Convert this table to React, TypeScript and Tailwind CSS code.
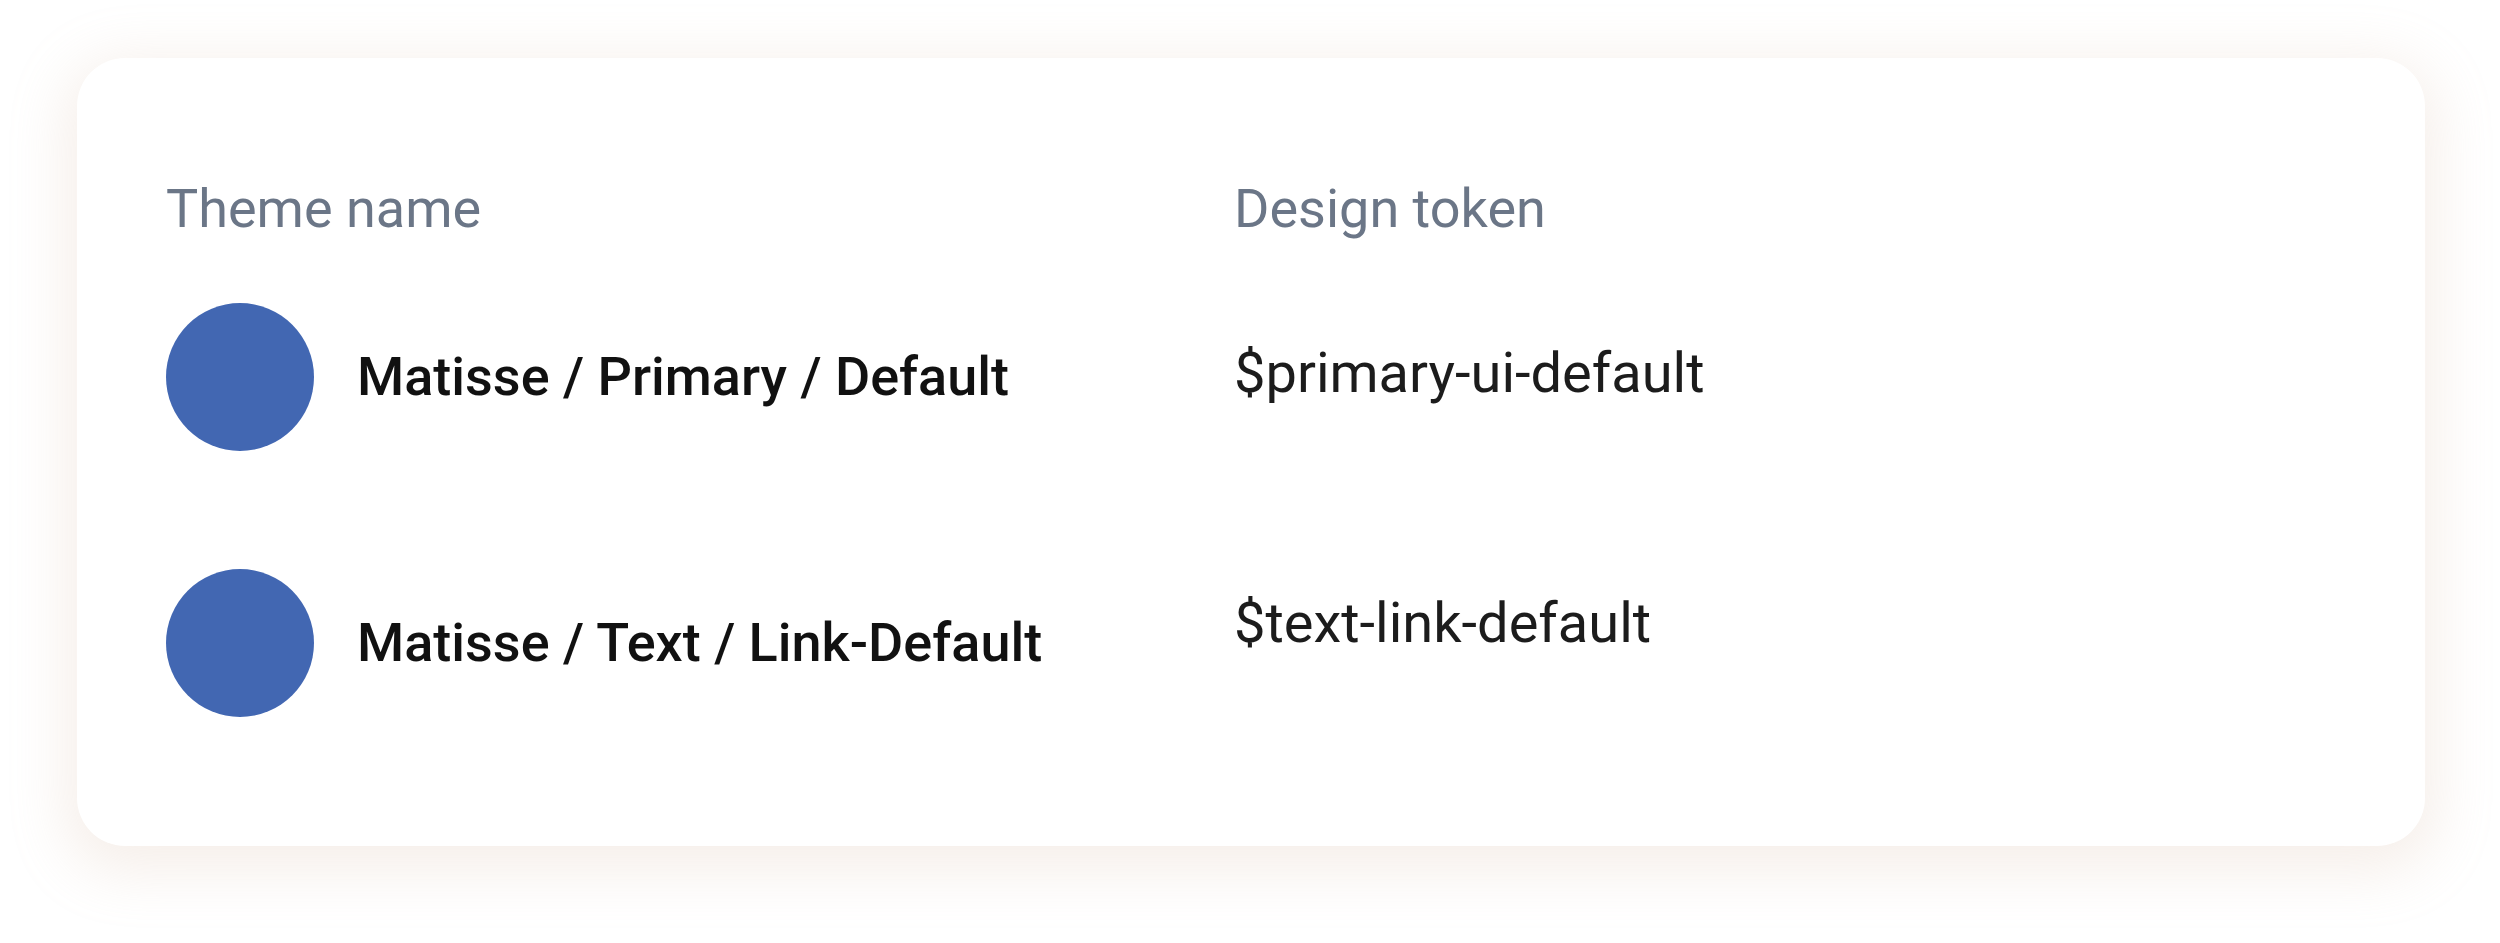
const rows = [
  { name: 'Matisse / Primary / Default', token: '$primary-ui-default', lift: 'pb-[8px]' },
  { name: 'Matisse / Text / Link-Default', token: '$text-link-default', lift: 'pb-[40px]' },
]

export default function App() {
  return (
    <div className="min-h-screen bg-white pl-[77px] pt-[58px] font-['Roboto',sans-serif]">
      <div className="w-[2348px] h-[788px] rounded-[48px] bg-white shadow-[0_14px_56px_12px_rgba(214,180,160,0.22)] pl-[89px] pt-[121px]">
        <div className="grid grid-cols-[1068px_1fr]">
          <div className="text-[54px] leading-[60px] text-[#6b7687]">Theme name</div>
          <div className="text-[54px] leading-[60px] text-[#6b7687]">Design token</div>
        </div>

        <div className="mt-[64px] flex flex-col gap-[118px]">
          {rows.map((r) => (
            <div key={r.name} className="grid grid-cols-[1068px_1fr] items-center">
              <div className="flex items-center gap-[43px]">
                <div className="w-[148px] h-[148px] rounded-full bg-[#4267b2] shrink-0" />
                <span className="text-[54px] leading-[64px] font-medium text-[#111111]">{r.name}</span>
              </div>
              <div className={r.lift}>
                <span className="text-[56px] leading-[64px] text-[#1c1c1c]">{r.token}</span>
              </div>
            </div>
          ))}
        </div>
      </div>
    </div>
  )
}
